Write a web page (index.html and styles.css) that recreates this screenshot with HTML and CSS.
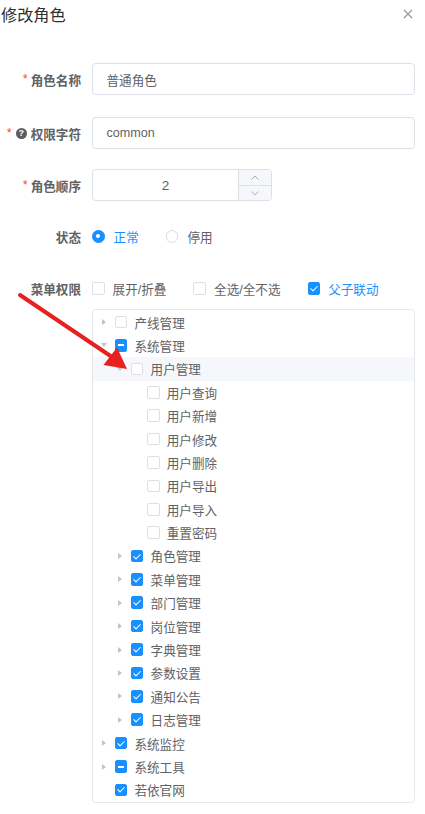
FILE: index.html
```html
<!DOCTYPE html>
<html lang="zh-CN">
<head>
<meta charset="utf-8">
<title>修改角色</title>
<link rel="stylesheet" href="styles.css">
</head>
<body>
<div class="dialog">
  <div class="header">
    <span class="title">修改角色</span>
    <svg class="close" width="10" height="10" viewBox="0 0 10 10"><path d="M1 1 L9 9 M9 1 L1 9" stroke="#909399" stroke-width="1.1" fill="none"/></svg>
  </div>
  <div class="form">
    <div class="item item-first">
      <div class="label"><span class="req">*</span>角色名称</div>
      <div class="input">普通角色</div>
    </div>
    <div class="item">
      <div class="label"><span class="req">*</span><span class="qicon">?</span>权限字符</div>
      <div class="input">common</div>
    </div>
    <div class="item item-num">
      <div class="label"><span class="req">*</span>角色顺序</div>
      <div class="number">
        <div class="num-value">2</div>
        <div class="stepper">
          <div class="step step-up"><svg width="8" height="5" viewBox="0 0 8 5"><path d="M0.5 4.5 L4 1 L7.5 4.5" stroke="#a0a3a9" fill="none" stroke-width="0.9"/></svg></div>
          <div class="step"><svg width="8" height="5" viewBox="0 0 8 5"><path d="M0.5 0.5 L4 4 L7.5 0.5" stroke="#a0a3a9" fill="none" stroke-width="0.9"/></svg></div>
        </div>
      </div>
    </div>
    <div class="item">
      <div class="label">状态</div>
      <div class="radios">
        <span class="radio-wrap active"><span class="radio checked"></span><span class="opt">正常</span></span>
        <span class="radio-wrap"><span class="radio"></span><span class="opt">停用</span></span>
      </div>
    </div>
    <div class="item item-menu">
      <div class="label">菜单权限</div>
      <div class="menu-content">
        <div class="checks">
          <span class="check-wrap"><span class="cb"></span><span class="opt">展开/折叠</span></span>
          <span class="check-wrap"><span class="cb"></span><span class="opt">全选/全不选</span></span>
          <span class="check-wrap active"><span class="cb checked"></span><span class="opt">父子联动</span></span>
        </div>
        <div class="tree">
          <div class="node lv1"><span class="caret right"></span><span class="cb"></span><span class="nlabel">产线管理</span></div>
          <div class="node lv1"><span class="caret down"></span><span class="cb half"></span><span class="nlabel">系统管理</span></div>
          <div class="node lv2 current"><span class="caret down"></span><span class="cb"></span><span class="nlabel">用户管理</span></div>
          <div class="node lv3"><span class="caret none"></span><span class="cb"></span><span class="nlabel">用户查询</span></div>
          <div class="node lv3"><span class="caret none"></span><span class="cb"></span><span class="nlabel">用户新增</span></div>
          <div class="node lv3"><span class="caret none"></span><span class="cb"></span><span class="nlabel">用户修改</span></div>
          <div class="node lv3"><span class="caret none"></span><span class="cb"></span><span class="nlabel">用户删除</span></div>
          <div class="node lv3"><span class="caret none"></span><span class="cb"></span><span class="nlabel">用户导出</span></div>
          <div class="node lv3"><span class="caret none"></span><span class="cb"></span><span class="nlabel">用户导入</span></div>
          <div class="node lv3"><span class="caret none"></span><span class="cb"></span><span class="nlabel">重置密码</span></div>
          <div class="node lv2"><span class="caret right"></span><span class="cb checked"></span><span class="nlabel">角色管理</span></div>
          <div class="node lv2"><span class="caret right"></span><span class="cb checked"></span><span class="nlabel">菜单管理</span></div>
          <div class="node lv2"><span class="caret right"></span><span class="cb checked"></span><span class="nlabel">部门管理</span></div>
          <div class="node lv2"><span class="caret right"></span><span class="cb checked"></span><span class="nlabel">岗位管理</span></div>
          <div class="node lv2"><span class="caret right"></span><span class="cb checked"></span><span class="nlabel">字典管理</span></div>
          <div class="node lv2"><span class="caret right"></span><span class="cb checked"></span><span class="nlabel">参数设置</span></div>
          <div class="node lv2"><span class="caret right"></span><span class="cb checked"></span><span class="nlabel">通知公告</span></div>
          <div class="node lv2"><span class="caret right"></span><span class="cb checked"></span><span class="nlabel">日志管理</span></div>
          <div class="node lv1"><span class="caret right"></span><span class="cb checked"></span><span class="nlabel">系统监控</span></div>
          <div class="node lv1"><span class="caret right"></span><span class="cb half"></span><span class="nlabel">系统工具</span></div>
          <div class="node lv1"><span class="caret none"></span><span class="cb checked"></span><span class="nlabel">若依官网</span></div>
        </div>
      </div>
    </div>
  </div>
  <svg class="annot" width="425" height="814" viewBox="0 0 425 814">
    <line x1="20" y1="295" x2="112" y2="357" stroke="#e6211f" stroke-width="4" stroke-linecap="round"/>
    <polygon points="127,369 103.5,365 117,347.5" fill="#e6211f"/>
  </svg>
</div>
</body>
</html>
```
FILE: styles.css
```css
* { box-sizing: border-box; }
html, body { margin: 0; padding: 0; background: #fff; }
body {
  font-family: "Liberation Sans", "Noto Sans CJK SC", sans-serif;
  font-size: 12.6px;
  color: #606266;
}
.dialog { position: relative; width: 425px; height: 814px; overflow: hidden; }
.header {
  display: flex;
  justify-content: space-between;
  align-items: center;
  height: 30px;
  padding: 0 12px 0 1px;
}
.title { font-size: 16.2px; color: #303133; line-height: 30px; }
.close { display: block; margin-top: -2px; }
.form { padding-top: 33px; }
.item { display: flex; align-items: center; margin-bottom: 20px; }
.item-first { margin-bottom: 22px; }
.item-num { margin-bottom: 19px; }
.label {
  width: 92px;
  flex: none;
  padding-right: 11px;
  display: flex;
  justify-content: flex-end;
  align-items: center;
  font-weight: 700;
  color: #606266;
  height: 32px;
}
.req { color: #ff4949; font-weight: 400; margin-right: 3px; font-size: 12.6px; }
.qicon {
  width: 11px; height: 11px; border-radius: 50%;
  background: #5a5c61; color: #fff;
  font-size: 9px; line-height: 11px; text-align: center;
  font-weight: 700; margin-right: 4px; margin-left: 1px;
}
.input {
  width: 323px;
  height: 32px;
  border: 1px solid #dcdfe6;
  border-radius: 3.6px;
  padding: 0 13.5px;
  display: flex;
  align-items: center;
  color: #606266;
}
.number {
  width: 180px;
  height: 32.4px;
  border: 1px solid #dcdfe6;
  border-radius: 3.6px;
  display: flex;
  overflow: hidden;
}
.num-value {
  flex: 1;
  display: flex;
  align-items: center;
  justify-content: center;
  font-size: 13.5px;
  color: #606266;
}
.stepper {
  width: 33px;
  border-left: 1px solid #dcdfe6;
  background: #f5f7fa;
  display: flex;
  flex-direction: column;
}
.step { flex: 1; display: flex; align-items: center; justify-content: center; }
.step svg { display: block; }
.step-up { border-bottom: 1px solid #dcdfe6; }
.radios, .checks { display: flex; align-items: center; height: 32px; }
.radio-wrap, .check-wrap { display: flex; align-items: center; margin-right: 27px; color: #606266; }
.radio-wrap.active .opt, .check-wrap.active .opt { color: #1890ff; }
.opt { margin-left: 9px; }
.check-wrap .opt { margin-left: 8px; }
.radio {
  width: 12.6px; height: 12.6px; border-radius: 50%;
  border: 1px solid #dcdfe6; background: #fff;
  display: flex; align-items: center; justify-content: center;
}
.radio.checked { background: #1890ff; border-color: #1890ff; }
.radio.checked::after { content: ""; width: 4px; height: 4px; border-radius: 50%; background: #fff; }
.item-menu { align-items: flex-start; }
.menu-content { display: flex; flex-direction: column; }
.cb {
  position: relative;
  flex: none;
  width: 12.6px; height: 12.6px;
  border: 1px solid #dcdfe6;
  border-radius: 2px;
  background: #fff;
}
.cb.checked, .cb.half { background: #1890ff; border-color: #1890ff; }
.cb.checked::after {
  content: "";
  position: absolute;
  left: 3.4px; top: 0.9px;
  width: 2.7px; height: 6.3px;
  border: 1px solid #fff;
  border-left: 0; border-top: 0;
  transform: rotate(45deg);
}
.cb.half::before {
  content: "";
  position: absolute;
  left: 2.5px; right: 2.5px; top: 4.3px;
  height: 2px;
  background: #fff;
}
.tree {
  margin-top: 5px;
  width: 323px;
  border: 1px solid #e6e7ea;
  border-radius: 3.6px;
  background: #fff;
}
.node {
  display: flex;
  align-items: center;
  height: 23.4px;
  color: #606266;
}
.node.current { background: #f5f7fa; }
.lv2 { padding-left: 16.2px; }
.lv3 { padding-left: 32.4px; }
.caret {
  width: 21.6px;
  height: 23.4px;
  flex: none;
  display: flex;
  align-items: center;
  justify-content: center;
}
.caret.right::before {
  content: "";
  border-left: 4.5px solid #c0c4cc;
  border-top: 3.5px solid transparent;
  border-bottom: 3.5px solid transparent;
}
.caret.down::before {
  content: "";
  border-top: 4.5px solid #c0c4cc;
  border-left: 3.5px solid transparent;
  border-right: 3.5px solid transparent;
}
.nlabel { margin-left: 7.2px; }
.annot { position: absolute; left: 0; top: 0; pointer-events: none; }
```
